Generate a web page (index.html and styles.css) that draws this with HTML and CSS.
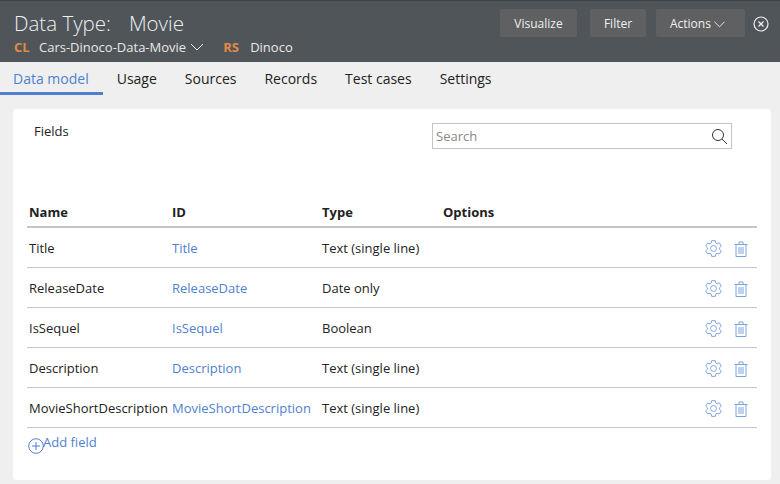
FILE: index.html
```html
<!DOCTYPE html>
<html lang="en">
<head>
    <meta charset="UTF-8">
    <title>Data Type: Movie</title>
    <link rel="stylesheet" href="styles.css">
</head>
<body>
    <svg class="icon-defs" width="0" height="0">
        <symbol id="gear" viewBox="0 0 16 16">
            <path fill="none" stroke="currentColor" stroke-width=".9" stroke-linejoin="round" d="M6.300 .6h3.400l.5 2.200 1.200.7 2.200-.7 1.700 3-1.700 1.500v1.400l1.700 1.500-1.700 3-2.200-.7-1.200.7-.5 2.200H6.300l-.5-2.200-1.200-.7-2.200.7-1.700-3 1.700-1.500V7.300L.7 5.800l1.700-3 2.200.7 1.200-.7z"/>
            <circle cx="8" cy="8" r="2.800" fill="none" stroke="currentColor" stroke-width=".9"/>
        </symbol>
        <symbol id="trash" viewBox="0 0 14 16">
            <path fill="none" stroke="currentColor" d="M.5 3.500h13M5 3.500V1h4v2.500M2 3.500V15.500h10V3.500M5 6v7M7 6v7M9 6v7"/>
        </symbol>
    </svg>

    <header class="top-bar">
        <div class="title-block">
            <h1 class="page-title"><span>Data Type:</span><span>Movie</span></h1>
            <div class="meta-row">
                <span class="meta-tag">CL</span>
                <span class="meta-value">Cars-Dinoco-Data-Movie</span>
                <svg class="chevron" width="14" height="8" viewBox="0 0 14 8"><path d="M1 1l6 6 6-6" fill="none" stroke="currentColor"/></svg>
                <span class="meta-tag meta-tag-rs">RS</span>
                <span class="meta-value">Dinoco</span>
            </div>
        </div>
        <div class="top-actions">
            <button class="top-btn btn-visualize">Visualize</button>
            <button class="top-btn btn-filter">Filter</button>
            <button class="top-btn btn-actions">Actions
                <svg class="chevron" width="11" height="7" viewBox="0 0 12 7"><path d="M.5.5L6 6 11.500.5" fill="none" stroke="currentColor"/></svg>
            </button>
            <svg class="close-icon" width="16" height="16" viewBox="0 0 16 16">
                <circle cx="8" cy="8" r="7" fill="none" stroke="currentColor" stroke-width="1.200"/>
                <path d="M5.500 5.500l5 5M10.500 5.500l-5 5" stroke="currentColor" stroke-width="1.300"/>
            </svg>
        </div>
    </header>

    <nav class="tabs">
        <a class="tab active">Data model</a>
        <a class="tab">Usage</a>
        <a class="tab">Sources</a>
        <a class="tab">Records</a>
        <a class="tab">Test cases</a>
        <a class="tab">Settings</a>
    </nav>

    <main class="card">
        <div class="card-head">
            <div class="fields-label">Fields</div>
            <div class="search-box">
                <span class="search-text">Search</span>
                <svg width="17" height="17" viewBox="0 0 17 17"><circle cx="7" cy="7" r="5.500" fill="none" stroke="#333"/><path d="M11 11l5 5" stroke="#333"/></svg>
            </div>
        </div>

        <div class="table">
            <div class="row head-row">
                <div>Name</div>
                <div>ID</div>
                <div>Type</div>
                <div>Options</div>
            </div>
            <div class="row">
                <div>Title</div>
                <a class="link">Title</a>
                <div>Text (single line)</div>
                <div class="row-icons">
                    <svg class="gear"><use href="#gear"/></svg>
                    <svg class="trash"><use href="#trash"/></svg>
                </div>
            </div>
            <div class="row">
                <div>ReleaseDate</div>
                <a class="link">ReleaseDate</a>
                <div>Date only</div>
                <div class="row-icons">
                    <svg class="gear"><use href="#gear"/></svg>
                    <svg class="trash"><use href="#trash"/></svg>
                </div>
            </div>
            <div class="row">
                <div>IsSequel</div>
                <a class="link">IsSequel</a>
                <div>Boolean</div>
                <div class="row-icons">
                    <svg class="gear"><use href="#gear"/></svg>
                    <svg class="trash"><use href="#trash"/></svg>
                </div>
            </div>
            <div class="row">
                <div>Description</div>
                <a class="link">Description</a>
                <div>Text (single line)</div>
                <div class="row-icons">
                    <svg class="gear"><use href="#gear"/></svg>
                    <svg class="trash"><use href="#trash"/></svg>
                </div>
            </div>
            <div class="row">
                <div>MovieShortDescription</div>
                <a class="link">MovieShortDescription</a>
                <div>Text (single line)</div>
                <div class="row-icons">
                    <svg class="gear"><use href="#gear"/></svg>
                    <svg class="trash"><use href="#trash"/></svg>
                </div>
            </div>
        </div>

        <a class="add-field">
            <svg width="16" height="16" viewBox="0 0 16 16"><circle cx="8" cy="8" r="7.300" fill="none" stroke="currentColor"/><path d="M8 4v8M4 8h8" stroke="currentColor"/></svg>
            <span>Add field</span>
        </a>
    </main>
</body>
</html>
```

FILE: styles.css
```css
* {
    margin: 0;
    padding: 0;
    box-sizing: border-box;
}

body {
    font-family: "Open Sans", sans-serif;
    font-size: 13px;
    color: #222;
    background: #efefef;
    height: 484px;
    overflow: hidden;
}

.icon-defs {
    display: block;
    height: 0;
}

.top-bar {
    height: 62px;
    background: #50555a;
    border-top: 1px solid #3f4347;
    display: flex;
    justify-content: space-between;
    padding: 0 11px 0 14px;
}

.page-title {
    display: flex;
    gap: 18px;
    font-size: 20.500px;
    font-weight: 300;
    line-height: 27px;
    color: #eef0f0;
    margin-top: 9px;
}

.meta-row {
    display: flex;
    align-items: center;
    height: 20px;
    color: #e8e8e8;
    font-size: 13px;
}

.meta-tag {
    font-weight: 700;
    color: #e08b45;
    width: 25px;
}

.meta-tag-rs {
    margin-left: 19px;
    width: 27px;
}

.meta-row .chevron {
    margin-left: 4px;
}

.top-actions {
    display: flex;
    align-items: flex-start;
    padding-top: 8px;
}

.top-btn {
    height: 28px;
    background: #5f6062;
    border: none;
    border-radius: 2px;
    color: #f0f0f0;
    font-family: inherit;
    font-size: 12px;
}

.btn-visualize {
    width: 77px;
    margin-right: 13px;
}

.btn-filter {
    width: 56px;
    margin-right: 10px;
}

.btn-actions {
    width: 89px;
    margin-right: 8px;
    padding-right: 6px;
}

.close-icon {
    color: #f0f0f0;
    margin-top: 7px;
}

.tabs {
    display: flex;
    height: 33px;
    background: #efefef;
}

.tab {
    padding: 0 14px;
    line-height: 33px;
    font-size: 14px;
    color: #222;
}

.tab.active {
    padding-left: 13px;
    color: #4f7fd0;
    border-bottom: 3px solid #4f7fd0;
}

.card {
    margin: 14px 9px 0 13px;
    height: 371px;
    background: #fff;
    border-radius: 3px;
    padding: 0 14px;
}

.card-head {
    display: flex;
    justify-content: space-between;
    height: 83px;
    padding-top: 14px;
}

.fields-label {
    margin-left: 7px;
    margin-top: -1px;
}

.search-box {
    width: 300px;
    height: 26px;
    border: 1px solid #c4c4c4;
    display: flex;
    align-items: center;
    justify-content: space-between;
    padding: 0 3px 0 3px;
    margin-right: 25px;
}

.search-text {
    color: #888;
}

.row {
    display: grid;
    grid-template-columns: 143px 150px 121px 1fr;
    align-items: center;
    height: 40px;
    padding-left: 2px;
    border-bottom: 1px solid #c9c9c9;
}

.head-row {
    height: 36px;
    border-bottom: 2px solid #c6c6c6;
    font-weight: 700;
    padding-top: 5px;
}

.link {
    color: #4f7fd0;
}

.row-icons {
    display: flex;
    justify-content: flex-end;
    align-items: center;
    gap: 12px;
    color: #7ba4dc;
    padding-top: 2px;
    padding-right: 9px;
}

.gear {
    width: 17px;
    height: 17px;
}

.trash {
    width: 14px;
    height: 16px;
}

.add-field {
    display: flex;
    color: #4f7fd0;
    padding-left: 1px;
    margin-top: 5px;
}

.add-field svg {
    margin-top: 5px;
    margin-right: -1px;
}
```
